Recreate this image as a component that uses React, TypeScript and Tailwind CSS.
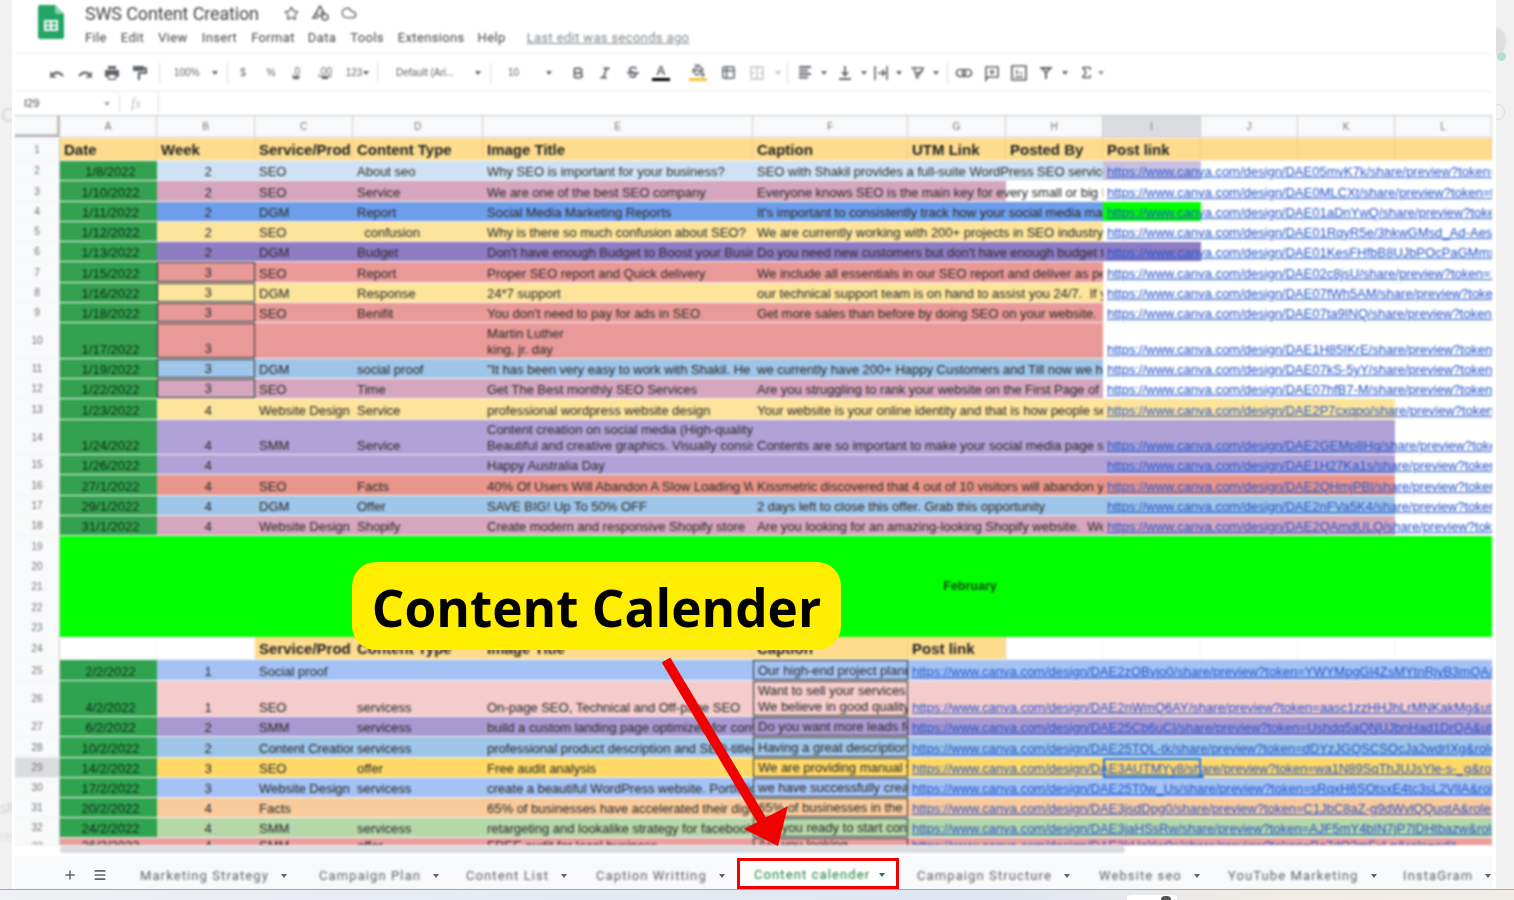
import React from 'react';
import { Star, Cloud, Bold, Italic, PaintBucket, Table2, Sigma, Plus, Menu } from 'lucide-react';

const cols = 'grid grid-cols-[45px_97px_98px_98px_130px_270px_155px_98px_97px_98px_97px_97px_97px]';
const canva = 'https://www.canva.com/design/';

interface RowData {
  n: number;
  h: string;
  bg: string;
  date: string;
  week: string;
  svc?: string;
  type?: string;
  title?: string;
  cap?: string;
  link: string;
  capBg?: string;
  linkBg?: string;
  boxed?: boolean;
}

const pink = 'bg-[#d5a6bd]';
const rose = 'bg-[#e99a98]';
const sand = 'bg-[#fde49b]';
const sky = 'bg-[#9fc5e8]';
const violet = 'bg-[#b0a2d6]';

const topRows: RowData[] = [
  { n: 2, h: 'h-[20px]', bg: 'bg-[#cfe2f3]', date: '1/8/2022', week: '2', svc: 'SEO', type: 'About seo', title: 'Why SEO is important for your business?', cap: 'SEO with Shakil provides a full-suite WordPress SEO service', link: 'DAE05mvK7k/share/preview?token=s', linkBg: 'bg-[linear-gradient(to_right,#c9bfe2_98px,#fff_98px)]' },
  { n: 3, h: 'h-[21px]', bg: pink, date: '1/10/2022', week: '2', svc: 'SEO', type: 'Service', title: 'We are one of the best SEO company', cap: 'Everyone knows SEO is the main key for every small or big business', link: 'DAE0MLCXt/share/preview?token=ts', capBg: 'bg-[linear-gradient(to_right,#d5a6bd_253px,#fff_253px)]' },
  { n: 4, h: 'h-[20px]', bg: 'bg-[#6d9eeb]', date: '1/11/2022', week: '2', svc: 'DGM', type: 'Report', title: 'Social Media Marketing Reports', cap: "It's important to consistently track how your social media marketing", link: 'DAE01aDnYwQ/share/preview?toke', linkBg: 'bg-[linear-gradient(to_right,#00ff00_98px,#fff_98px)]' },
  { n: 5, h: 'h-[20px]', bg: sand, date: '1/12/2022', week: '2', svc: 'SEO', type: '  confusion', title: 'Why is there so much confusion about SEO?', cap: 'We are currently working with 200+ projects in SEO industry.', link: 'DAE01RqyR5e/3hkwGMsd_Ad-Aes' },
  { n: 6, h: 'h-[20px]', bg: 'bg-[#8e7cc3]', date: '1/13/2022', week: '2', svc: 'DGM', type: 'Budget', title: "Don't have enough Budget to Boost your Business", cap: "Do you need new customers but don't have enough budget to", link: 'DAE01KesFHfbB8UJbPOcPaGMmx', linkBg: 'bg-[linear-gradient(to_right,#8e7cc3_98px,#fff_98px)]' },
  { n: 7, h: 'h-[21px]', bg: rose, date: '1/15/2022', week: '3', svc: 'SEO', type: 'Report', title: 'Proper SEO report and Quick delivery', cap: 'We include all essentials in our SEO report and deliver as per', link: 'DAE02c8jsU/share/preview?token=1', boxed: true },
  { n: 8, h: 'h-[20px]', bg: sand, date: '1/16/2022', week: '3', svc: 'DGM', type: 'Response', title: '24*7 support', cap: 'our technical support team is on hand to assist you 24/7.  If you', link: 'DAE07fWh5AM/share/preview?toke', boxed: true },
  { n: 9, h: 'h-[20px]', bg: rose, date: '1/18/2022', week: '3', svc: 'SEO', type: 'Benifit', title: "You don't need to pay for ads in SEO", cap: 'Get more sales than before by doing SEO on your website.', link: 'DAE07ta9INQ/share/preview?token=', boxed: true },
  { n: 10, h: 'h-[36px]', bg: rose, date: '1/17/2022', week: '3', title: 'Martin Luther\nking, jr. day', link: 'DAE1H85IKrE/share/preview?token=', boxed: true },
  { n: 11, h: 'h-[20px]', bg: sky, date: '1/19/2022', week: '3', svc: 'DGM', type: 'social proof', title: '"It has been very easy to work with Shakil. He t', cap: 'we currently have 200+ Happy Customers and Till now we have', link: 'DAE07kS-5yY/share/preview?token=', boxed: true },
  { n: 12, h: 'h-[20px]', bg: pink, date: '1/22/2022', week: '3', svc: 'SEO', type: 'Time', title: 'Get The Best monthly SEO Services', cap: 'Are you struggling to rank your website on the First Page of Google', link: 'DAE07hfB7-M/share/preview?token=', boxed: true },
  { n: 13, h: 'h-[21px]', bg: sand, date: '1/23/2022', week: '4', svc: 'Website Design', type: 'Service', title: 'professional wordpress website design', cap: 'Your website is your online identity and that is how people see', link: 'DAE2P7cxqpo/share/preview?token=', linkBg: 'bg-[linear-gradient(to_right,#fde49b_292px,#fff_292px)]' },
  { n: 14, h: 'h-[35px]', bg: violet, date: '1/24/2022', week: '4', svc: 'SMM', type: 'Service', title: 'Content creation on social media (High-quality\nBeautiful and creative graphics. Visually consis', cap: 'Contents are so important to make your social media page stand', link: 'DAE2GEMp8Hg/share/preview?toke', linkBg: 'bg-[linear-gradient(to_right,#b0a2d6_292px,#fff_292px)]' },
  { n: 15, h: 'h-[20px]', bg: violet, date: '1/26/2022', week: '4', title: 'Happy Australia Day', link: 'DAE1H27Ka1s/share/preview?token', linkBg: 'bg-[linear-gradient(to_right,#b0a2d6_292px,#fff_292px)]' },
  { n: 16, h: 'h-[21px]', bg: 'bg-[#e8958b]', date: '27/1/2022', week: '4', svc: 'SEO', type: 'Facts', title: '40% Of Users Will Abandon A Slow Loading Website', cap: 'Kissmetric discovered that 4 out of 10 visitors will abandon your', link: 'DAE2QHmjPBl/share/preview?token', linkBg: 'bg-[linear-gradient(to_right,#e8958b_292px,#fff_292px)]' },
  { n: 17, h: 'h-[20px]', bg: sky, date: '29/1/2022', week: '4', svc: 'DGM', type: 'Offer', title: 'SAVE BIG! Up To 50% OFF', cap: '2 days left to close this offer. Grab this opportunity', link: 'DAE2nFVa5K4/share/preview?token', linkBg: 'bg-[linear-gradient(to_right,#9fc5e8_292px,#fff_292px)]' },
  { n: 18, h: 'h-[20px]', bg: pink, date: '31/1/2022', week: '4', svc: 'Website Design', type: 'Shopify', title: 'Create modern and responsive Shopify store', cap: 'Are you looking for an amazing-looking Shopify website.  We', link: 'DAE2QAmdULQ/share/preview?toke', linkBg: 'bg-[linear-gradient(to_right,#d5a6bd_292px,#fff_292px)]' },
];

const bottomRows: RowData[] = [
  { n: 25, h: 'h-[21px]', bg: 'bg-[#a4c2f4]', date: '2/2/2022', week: '1', svc: 'Social proof', cap: 'Our high-end project planner', link: 'DAE2zOBvjo0/share/preview?token=YWYMpgGl4ZsMYtnRjyB3mQA&utm_content' },
  { n: 26, h: 'h-[36px]', bg: 'bg-[#f4cccc]', date: '4/2/2022', week: '1', svc: 'SEO', type: 'servicess', title: 'On-page SEO, Technical and Off-page SEO', cap: 'Want to sell your services\nWe believe in good quality', link: 'DAE2nWmQ6AY/share/preview?token=aasc1zzHHJhLrMNKakMg&utm_content' },
  { n: 27, h: 'h-[20px]', bg: 'bg-[#a999d1]', date: '6/2/2022', week: '2', svc: 'SMM', type: 'servicess', title: 'build a custom landing page optimized for conversions', cap: 'Do you want more leads for', link: 'DAE25Cb6uCI/share/preview?token=Ushdq5aQNUJbnHad1DrQA&utm_content' },
  { n: 28, h: 'h-[21px]', bg: sky, date: '10/2/2022', week: '2', svc: 'Content Creation', type: 'servicess', title: 'professional product description and SEO-titled', cap: 'Having a great description', link: 'DAE25TQL-tk/share/preview?token=dDYzJGQSCSOcJa2wdrIXg&role=edit' },
  { n: 29, h: 'h-[20px]', bg: 'bg-[#ffd966]', date: '14/2/2022', week: '3', svc: 'SEO', type: 'offer', title: 'Free audit analysis', cap: 'We are providing manual website', link: 'DAE3AUTMYy8/share/preview?token=wa1N89SqThJUJsYle-s-_g&role=edit' },
  { n: 30, h: 'h-[20px]', bg: 'bg-[#a4c2f4]', date: '17/2/2022', week: '3', svc: 'Website Design', type: 'servicess', title: 'create a beautiful WordPress website. Portfolio', cap: 'we have successfully created', link: 'DAE25T0w_Us/share/preview?token=sRqxH6SOtsxE4tc3sL2VllA&role=edit' },
  { n: 31, h: 'h-[20px]', bg: 'bg-[#f9cb9c]', date: '20/2/2022', week: '4', svc: 'Facts', title: '65% of businesses have accelerated their digital', cap: '65% of businesses in the US', link: 'DAE3jsdDpg0/share/preview?token=C1JbC8aZ-g9dWvlQQuqtA&role=edit' },
  { n: 32, h: 'h-[20px]', bg: 'bg-[#b6d7a8]', date: '24/2/2022', week: '4', svc: 'SMM', type: 'servicess', title: 'retargeting and lookalike strategy for facebook', cap: 'Are you ready to start content', link: 'DAE3jaHSsRw/share/preview?token=AJF5mY4bIN7jP7lDHtbazw&role=edit' },
  { n: 33, h: 'h-[8px]', bg: 'bg-[#ea9f9f]', date: '26/2/2022', week: '4', svc: 'SMM', type: 'offer', title: 'FREE audit for local business', cap: 'Are you looking', link: 'DAE3kHqYw0s/share/preview?token=Bc7dQ2mFxLp&role=edit' },
];

const letters = ['A', 'B', 'C', 'D', 'E', 'F', 'G', 'H', 'I', 'J', 'K', 'L'];

const Caret = ({ className = '' }: { className?: string }) => (
  <div className={`h-0 w-0 shrink-0 border-x-[3.5px] border-t-[4px] border-x-transparent border-t-[#5f6368] ${className}`} />
);

const Sep = ({ className = '' }: { className?: string }) => <div className={`h-[20px] w-px shrink-0 bg-[#dadce0] ${className}`} />;

const RowHead = ({ n, active }: { n: number; active?: boolean }) => (
  <div className={`flex items-center justify-center border-r border-[#c8c8c8] text-[10px] font-normal text-[#777] ${active ? 'bg-[#dadce0]' : 'bg-[#f8f9fa]'}`}>{n}</div>
);

const Cell = ({ className = '', children }: { className?: string; children?: React.ReactNode }) => (
  <div className={`flex min-w-0 items-end overflow-hidden whitespace-pre pl-[4px] leading-[16px] ${className}`}>
    <span>{children}</span>
  </div>
);

const TopRow = ({ r }: { r: RowData }) => (
  <div className={`${cols} ${r.h} border-b border-black/5 text-[13px] text-[#2b2b2b]`}>
    <RowHead n={r.n} />
    <Cell className="justify-center bg-[#34a150] pl-0 text-[#0f2e16]">{r.date}</Cell>
    <Cell className={`justify-center pl-0 ${r.bg} ${r.boxed ? 'border-[1.5px] border-[#303030]' : ''}`}>{r.week}</Cell>
    <Cell className={r.bg}>{r.svc}</Cell>
    <Cell className={`pl-[3px] ${r.bg}`}>{r.type}</Cell>
    <Cell className={r.bg}>{r.title}</Cell>
    <Cell className={`col-span-3 ${r.capBg ?? r.bg}`}>{r.cap}</Cell>
    <Cell className={`col-span-4 pl-[3px] text-[#1f55cc] underline ${r.linkBg ?? 'bg-white'}`}>{canva + r.link}</Cell>
  </div>
);

const BottomRow = ({ r }: { r: RowData }) => (
  <div className={`${cols} ${r.h} ${r.n === 33 ? 'overflow-hidden' : ''} border-b border-black/5 text-[13px] text-[#2b2b2b]`}>
    <RowHead n={r.n} active={r.n === 29} />
    <Cell className={`justify-center pl-0 text-[#0f2e16] ${r.n === 33 ? r.bg : 'bg-[#2fa34f]'}`}>{r.date}</Cell>
    <Cell className={`justify-center pl-0 ${r.bg}`}>{r.week}</Cell>
    <Cell className={r.bg}>{r.svc}</Cell>
    <Cell className={`pl-[3px] ${r.bg}`}>{r.type}</Cell>
    <Cell className={r.bg}>{r.title}</Cell>
    <Cell className={`border-[1.5px] border-[#303030] ${r.bg}`}>{r.cap}</Cell>
    <div className={`relative col-span-6 min-w-0 ${r.bg}`}>
      <Cell className="h-full pl-[3px] text-[#1f55cc] underline">{canva + r.link}</Cell>
      {r.n === 29 && (
        <>
          <div className="absolute left-[195px] top-0 h-[20px] w-[98px] border-2 border-[#1a73e8]" />
          <div className="absolute left-[290px] top-[17px] h-[6px] w-[6px] rounded-full bg-[#1a73e8]" />
        </>
      )}
    </div>
  </div>
);

const HeadRow = ({ n, h, cells, from, to }: { n: number; h: string; cells: string[]; from: number; to: number }) => (
  <div className={`${cols} ${h} border-b border-black/5 text-[15px] font-bold text-[#222]`}>
    <RowHead n={n} />
    {cells.map((c, i) => (
      <Cell key={i} className={`border-r border-black/5 pb-[2px] ${i === 3 ? 'pl-[2px]' : ''} ${i >= from && i < to ? 'bg-[#fddc8e]' : 'bg-white'}`}>{c}</Cell>
    ))}
  </div>
);

const GreenRow = ({ n, h, label }: { n: number; h: string; label?: string }) => (
  <div className={`${cols} ${h}`}>
    <RowHead n={n} />
    <div className="col-span-6 bg-[#00ff00]" />
    <div className="flex items-center justify-center whitespace-nowrap bg-[#00ff00] pl-[26px] text-[12.5px] font-bold text-[#1b4d1b]">{label}</div>
    <div className="col-span-5 bg-[#00ff00]" />
  </div>
);

const SheetsLogo = () => (
  <svg width="26" height="34" viewBox="0 0 26 34" className="shrink-0">
    <path d="M2 0h15l9 9v23a2 2 0 0 1-2 2H2a2 2 0 0 1-2-2V2a2 2 0 0 1 2-2z" fill="#23a566" />
    <path d="M17 0l9 9h-7a2 2 0 0 1-2-2z" fill="#8ed1b1" />
    <path d="M6 15h14v11H6z" fill="#fff" />
    <path d="M8 17h4v2.5H8zM14 17h4v2.5h-4zM8 21.5h4V24H8zM14 21.5h4V24h-4z" fill="#23a566" />
  </svg>
);

// toolbar glyphs drawn to follow the Sheets icon set
const Svg = ({ children, fill = 'none' }: { children: React.ReactNode; fill?: string }) => (
  <svg width="18" height="18" viewBox="0 0 18 18" fill={fill} stroke="currentColor" strokeWidth="1.8">{children}</svg>
);
const UndoIcon = () => <Svg><path d="M3 8v5h5" strokeWidth="1.6" /><path d="M4 12c2-4 7-5 11 0" strokeWidth="2.2" /></Svg>;
const RedoIcon = () => <Svg><path d="M15 8v5h-5" strokeWidth="1.6" /><path d="M14 12c-2-4-7-5-11 0" strokeWidth="2.2" /></Svg>;
const PrintIcon = () => <Svg><path d="M5 2h8v3H5zM2 6h14v7h-3v3H5v-3H2z" fill="currentColor" stroke="none" /><path d="M6 11h6v3.6H6z" fill="#fff" stroke="none" /></Svg>;
const RollerIcon = () => <Svg><path d="M3 2h11v5H3z" fill="currentColor" stroke="none" /><path d="M14 4.5h2V9H9v7" strokeWidth="2.2" /></Svg>;
const FormatDec = ({ label }: { label: string }) => (
  <div className="flex flex-col items-center leading-[10px]">
    <span className="text-[10px] underline">{label}</span>
    <span className="h-[2px] w-[6px] bg-[#5f6368]" />
  </div>
);
const StrikeIcon = () => <Svg><path d="M12.5 5c-1-2-6-2.500-7 0-.8 2 3 3 4 3.500 3 1 2.500 4.500-.5 4.500-2 0-3-1-3.500-2" /><path d="M3 9h12" /></Svg>;
const MergeIcon = () => <Svg><path d="M3 3h12v12H3zM3 9h3M12 9h3M9 3v12" strokeWidth="1.3" /></Svg>;
const AlignIcon = () => <Svg><path d="M3 3h12M3 6.500h9M3 10h12M3 13.500h9" strokeWidth="2" /></Svg>;
const ValignIcon = () => <Svg><path d="M9 2v9M6 8l3 3.500L12 8" /><path d="M3 15h12" strokeWidth="2" /></Svg>;
const WrapIcon = () => <Svg><path d="M3 2v14M15 2v14M6 9h6M10 6l3 3-3 3" strokeWidth="1.6" /></Svg>;
const RotateIcon = () => <Svg><path d="M2 4h13M5 4l3 10 6-9M6 10l8-3" strokeWidth="1.5" /></Svg>;
const LinkIcon = () => <Svg><path d="M7 5.500H5a3.500 3.500 0 0 0 0 7h2a3.500 3.500 0 0 0 0-7zM13 5.500h-2a3.500 3.500 0 0 0 0 7h2a3.500 3.500 0 0 0 0-7z" strokeWidth="1.7" /></Svg>;
const CommentIcon = () => <Svg><path d="M3 3h12v10H5l-2 3zM9 5.500v5M6.500 8h5" strokeWidth="1.6" /></Svg>;
const ChartIcon = () => <Svg><path d="M2 2h14v14H2zM5 13h8M7 10V6M11 10V8" strokeWidth="1.7" /></Svg>;
const FunnelIcon = () => <Svg><path d="M3 4h12M5 4l4 5v6M13 4L9 9" strokeWidth="2" /></Svg>;

const Tab = ({ label, className }: { label: string; className: string }) => (
  <div className={`flex h-full shrink-0 items-center pl-[18px] pt-[6px] ${className}`}>
    <span className="whitespace-nowrap font-['Roboto',sans-serif] text-[13px] tracking-[1.1px] text-[#5f6368] blur-[0.8px]">{label}</span>
    <Caret className="ml-[12px] blur-[0.5px]" />
  </div>
);

const Icon = ({ className = '', children }: { className?: string; children: React.ReactNode }) => (
  <div className={`flex h-[20px] w-[20px] shrink-0 items-center justify-center text-[#5f6368] ${className}`}>{children}</div>
);

export default function App() {
  const ic = { size: 15, strokeWidth: 2.4 };
  return (
    <div className="relative h-[900px] w-[1514px] overflow-hidden bg-[#f1f1f1] font-['Liberation_Sans',Arial,sans-serif]">
      {/* page showing faintly behind the dialog */}
      <span className="absolute left-[1px] top-[100px] text-[20px] text-[#d5d5d5] blur-[1px]">C</span>
      <span className="absolute left-0 top-[798px] text-[14px] text-[#cfcfcf] blur-[1px]">sh</span>
      <span className="absolute left-0 top-[826px] text-[14px] text-[#dcdcdc] blur-[1px]">re</span>
      <div className="absolute left-[1486px] top-[28px] h-[26px] w-[20px] rounded-full bg-[#dedede] blur-[1px]" />
      <div className="absolute left-[1497px] top-[52px] h-[9px] w-[9px] rounded-full bg-[#b5ddc9] blur-[0.5px]" />
      <div className="absolute left-[1489px] top-[104px] h-[16px] w-[16px] rounded-full border border-[#ecd5d5]" />

      <div className="relative ml-[12px] flex h-[889px] w-[1484px] flex-col bg-white pl-[3px] pr-[4px]">
        <div className="shrink-0 blur-[0.8px]">
          {/* title + menu */}
          <div className="flex h-[53px] gap-[21px] pl-[23px] pt-[5px]">
            <SheetsLogo />
            <div className="flex flex-col">
              <div className="flex h-[16px] items-center">
                <span className="font-['Roboto',sans-serif] text-[18px] tracking-[-0.15px] text-[#444]">SWS Content Creation</span>
                <Star size={15} className="ml-[25px] text-[#5f6368]" />
                <svg width="18" height="16" viewBox="0 0 18 16" fill="none" stroke="#5f6368" strokeWidth="1.6" className="ml-[12px]"><path d="M9 1l-4 7 2 3h4l2-3zM5 8l-3 5h5M13 8h-4" /><circle cx="14" cy="12" r="3" /></svg>
                <Cloud size={16} className="ml-[12px] text-[#5f6368]" />
              </div>
              <div className="mt-[9px] flex h-[16px] items-center font-['Roboto',sans-serif] text-[13px] tracking-[0.35px] text-[#444]">
                <span>File</span>
                <span className="ml-[14px]">Edit</span>
                <span className="ml-[14px]">View</span>
                <span className="ml-[14px]">Insert</span>
                <span className="ml-[14px]">Format</span>
                <span className="ml-[13px]">Data</span>
                <span className="ml-[14px]">Tools</span>
                <span className="ml-[14px]">Extensions</span>
                <span className="ml-[13px]">Help</span>
                <span className="ml-[21px] text-[#80868b] underline">Last edit was seconds ago</span>
              </div>
            </div>
          </div>
          {/* toolbar */}
          <div className="flex h-[39px] items-center border-y border-[#e8eaed] pl-[32px] text-[10px] text-[#5f6368]">
            <Icon><UndoIcon /></Icon>
            <Icon className="ml-[8px]"><RedoIcon /></Icon>
            <Icon className="ml-[7px]"><PrintIcon /></Icon>
            <Icon className="ml-[7px]"><RollerIcon /></Icon>
            <Sep className="ml-[10px]" />
            <span className="ml-[14px] w-[28px]">100%</span>
            <Caret className="ml-[10px]" />
            <Sep className="ml-[9px]" />
            <Icon className="ml-[5px]">$</Icon>
            <Icon className="ml-[8px]">%</Icon>
            <Icon className="ml-[5px]"><FormatDec label=".0" /></Icon>
            <Icon className="ml-[9px]"><FormatDec label=".00" /></Icon>
            <Icon className="ml-[9px]">123</Icon>
            <Caret className="ml-[-1px]" />
            <Sep className="ml-[8px]" />
            <span className="ml-[18px] w-[68px] whitespace-nowrap">Default (Ari...</span>
            <Caret className="ml-[11px]" />
            <Sep className="ml-[9px]" />
            <span className="ml-[17px] w-[22px]">10</span>
            <Caret className="ml-[16px]" />
            <Icon className="ml-[16px]"><Bold size={14} strokeWidth={3} /></Icon>
            <Icon className="ml-[7px]"><Italic size={14} strokeWidth={3} /></Icon>
            <Icon className="ml-[8px]"><StrikeIcon /></Icon>
            <div className="ml-[8px] flex h-[20px] w-[20px] shrink-0 flex-col items-center justify-center font-bold text-[#5f6368]">
              <span className="text-[13px] leading-[14px]">A</span>
              <div className="h-[3px] w-[18px] bg-black" />
            </div>
            <div className="ml-[17px] flex h-[20px] w-[20px] shrink-0 flex-col items-center justify-center text-[#5f6368]">
              <PaintBucket size={13} strokeWidth={2.6} />
              <div className="mt-[1px] h-[3px] w-[18px] bg-[#fbc02d]" />
            </div>
            <Icon className="ml-[10px]"><Table2 {...ic} /></Icon>
            <Icon className="ml-[9px] opacity-40"><MergeIcon /></Icon>
            <Caret className="ml-[8px] opacity-40" />
            <Sep className="ml-[6px]" />
            <Icon className="ml-[7px]"><AlignIcon /></Icon>
            <Caret className="ml-[6px]" />
            <Icon className="ml-[8px]"><ValignIcon /></Icon>
            <Caret className="ml-[6px]" />
            <Icon className="ml-[4px]"><WrapIcon /></Icon>
            <Caret className="ml-[5px]" />
            <Icon className="ml-[6px]"><RotateIcon /></Icon>
            <Caret className="ml-[5px]" />
            <Sep className="ml-[8px]" />
            <Icon className="ml-[6px]"><LinkIcon /></Icon>
            <Icon className="ml-[8px]"><CommentIcon /></Icon>
            <Icon className="ml-[7px]"><ChartIcon /></Icon>
            <Icon className="ml-[7px]"><FunnelIcon /></Icon>
            <Caret className="ml-[6px]" />
            <Icon className="ml-[8px]"><Sigma {...ic} /></Icon>
            <Caret className="ml-[2px] opacity-70" />
          </div>
          {/* formula bar */}
          <div className="flex h-[23px] items-center text-[11px] text-[#444]">
            <span className="ml-[9px] w-[80px]">I29</span>
            <Caret className="opacity-60" />
            <div className="ml-[9px] h-[17px] w-px bg-[#dadce0]" />
            <span className="ml-[11px] w-[27px] font-['Liberation_Serif',serif] text-[14px] italic text-[#bbb]">fx</span>
            <div className="h-[17px] w-px bg-[#dadce0]" />
          </div>
          {/* column letters */}
          <div className={`${cols} h-[23px] border-y border-[#c8c8c8] bg-[#f8f9fa] text-[10px] text-[#777]`}>
            <div className="border-b-[3px] border-r-[3px] border-[#bdbdbd]" />
            {letters.map((l) => (
              <div key={l} className={`flex items-center justify-center border-r border-[#d0d0d0] ${l === 'I' ? 'bg-[#dadce0]' : ''}`}>{l}</div>
            ))}
          </div>
        </div>

        {/* sheet */}
        <div className="min-h-0 flex-1 blur-[0.8px]">
          <HeadRow n={1} h="h-[23px]" from={0} to={12} cells={['Date', 'Week', 'Service/Prod', 'Content Type', 'Image Title', 'Caption', 'UTM Link', 'Posted By', 'Post link', '', '', '']} />
          {topRows.map((r) => <TopRow key={r.n} r={r} />)}
          <GreenRow n={19} h="h-[20px]" />
          <GreenRow n={20} h="h-[20px]" />
          <GreenRow n={21} h="h-[21px]" label="February" />
          <GreenRow n={22} h="h-[20px]" />
          <GreenRow n={23} h="h-[20px]" />
          <HeadRow n={24} h="h-[23px]" from={2} to={7} cells={['', '', 'Service/Prod', 'Content Type', 'Image Title', 'Caption', 'Post link', '', '', '', '', '']} />
          {bottomRows.map((r) => <BottomRow key={r.n} r={r} />)}
          {/* scrollbar */}
          <div className="h-[10px] bg-white pl-[45px]">
            <div className="h-[7px] w-[1065px] rounded-[4px] bg-[#dadce0]" />
          </div>
        </div>

        {/* tabs */}
        <div className="flex h-[33px] shrink-0 items-center bg-[#f8f9fa]">
          <Plus size={14} strokeWidth={2.5} className="ml-[48px] mt-[5px] text-[#5f6368] blur-[0.5px]" />
          <Menu size={14} strokeWidth={3} className="ml-[16px] mt-[5px] text-[#5f6368] blur-[0.5px]" />
          <div className="ml-[15px] flex h-full">
            <Tab label="Marketing Strategy" className="w-[179px]" />
            <Tab label="Campaign Plan" className="w-[147px]" />
            <Tab label="Content List" className="w-[130px]" />
            <Tab label="Caption Writting" className="w-[159px]" />
            <div className="flex h-[31px] w-[162px] shrink-0 items-center self-end border-[3px] border-[#f00000] bg-white pl-[14px] pt-[3px]">
              <span className="whitespace-nowrap font-['Roboto',sans-serif] text-[13px] tracking-[1.1px] text-[#188038] blur-[0.8px]">Content calender</span>
              <div className="ml-[9px] h-0 w-0 border-x-[3.5px] border-t-[4px] border-x-transparent border-t-[#188038]" />
            </div>
            <Tab label="Campaign Structure" className="w-[182px]" />
            <Tab label="Website seo" className="w-[129px]" />
            <Tab label="YouTube Marketing" className="w-[175px]" />
            <Tab label="InstaGram" className="w-[107px]" />
          </div>
        </div>
      </div>
      <div className="relative h-[11px] overflow-hidden border-t border-[#a8a8a8] bg-[linear-gradient(to_right,#eef0f3,#dfe6f2_65%,#f1ece4_85%,#f0ede8)]">
        <div className="ml-[1127px] mt-[5px] flex h-[12px] w-[50px] justify-end rounded-t-[4px] bg-white pr-[6px] pt-[1px]">
          <div className="h-[8px] w-[10px] rounded-full bg-[#555]" />
        </div>
      </div>

      {/* overlays on top of the screenshot */}
      <div className="absolute left-[352px] top-[562px] flex h-[88px] w-[489px] items-center justify-center rounded-[24px] bg-[#ffee00] pt-[4px]">
        <span className="font-['Open_Sans',sans-serif] text-[51.3px] font-bold leading-none text-black">Content Calender</span>
      </div>
      <svg className="absolute left-0 top-0" width="1514" height="900" viewBox="0 0 1514 900">
        <path d="M666 660L764 824" stroke="#f00000" strokeWidth="10" />
        <path d="M778 846L744 829L788 806Z" fill="#f00000" />
      </svg>
    </div>
  );
}
